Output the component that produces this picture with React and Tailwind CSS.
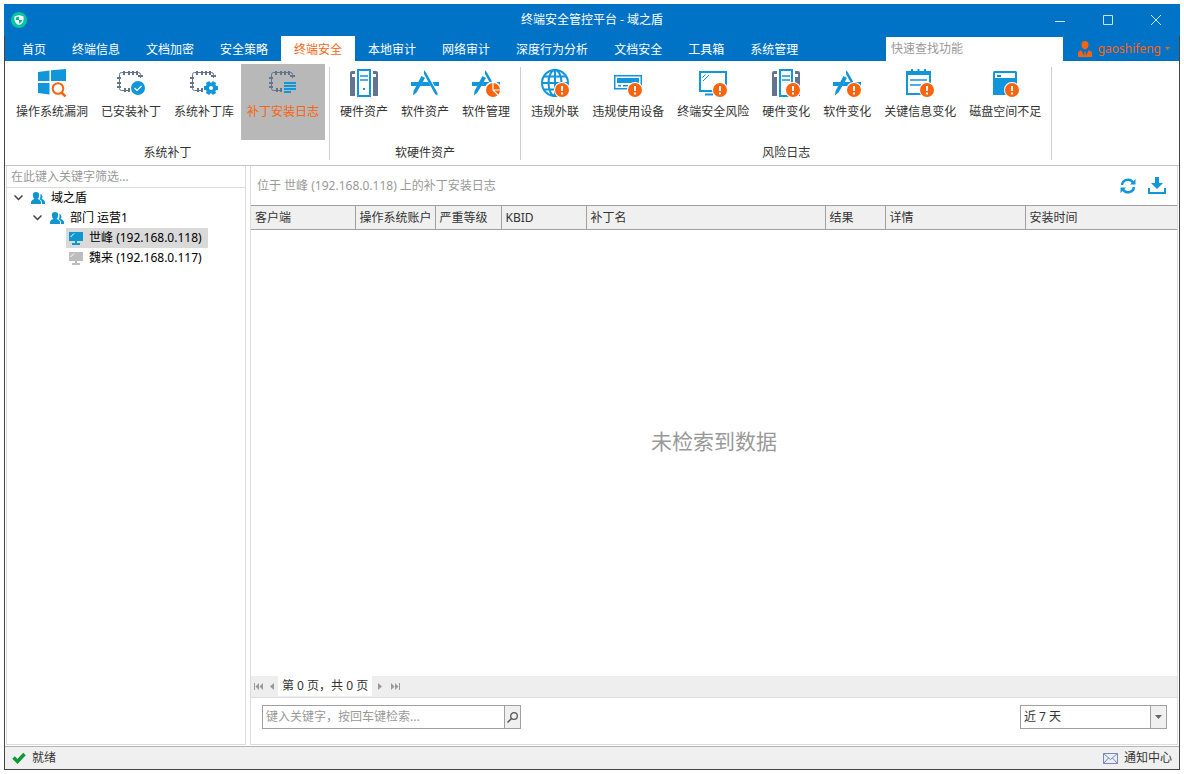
import { useState } from 'react';

const BLUE = '#1296db';
const SLATE = '#64748f';
const ORANGE = '#fa640f';

function Icon({ children }) {
  return (
    <svg width="28" height="28" viewBox="0 0 28 28" fill="none" aria-hidden="true">
      {children}
    </svg>
  );
}

function AlertBadge() {
  return (
    <g>
      <circle cx="21" cy="21" r="8" fill="#fff" />
      <circle cx="21" cy="21" r="7" fill={ORANGE} />
      <path d="M20 17h2v5h-2zM20 23.5h2v2h-2z" fill="#fff" />
    </g>
  );
}

function Chip() {
  return (
    <g stroke={SLATE}>
      <path d="M12 21.5H4.5Q2.5 21.5 2.5 19.5V5.5Q2.5 3.5 4.5 3.5H21.500Q23.500 3.500 23.500 5.500V9" />
      <path strokeWidth="2" d="M7 2v4M12 2v4M16 2v4M20 2v4M0 9h4M0 14h4M0 18h4M8 19v4M12 19v4M21 7h5" />
    </g>
  );
}

function Servers() {
  return (
    <g>
      <path d="M0 4Q0 2 2 2H5V5H2V8H5V27H0zM28 4Q28 2 26 2H23V5H26V8H23V27H28z" fill={SLATE} />
      <rect x="8" y="1" width="12" height="26" stroke={BLUE} strokeWidth="2" />
      <path d="M10 7h8M10 11h8" stroke={BLUE} strokeWidth="1.500" />
      <path d="M13 19h2v2h-2z" fill={BLUE} />
    </g>
  );
}

function Compass() {
  return (
    <g>
      <path d="M0 13h8l-2.500 4H0zM11.500 13h6l2 4H9zM21.500 13H28v4h-4.500z" fill={BLUE} />
      <path d="M10.500 7l3.500 2L5.500 23.500 2 26.500l.5-4.500zM13 1l2 2.500L26.500 24v2.500L24 25 13 5z" fill={BLUE} />
    </g>
  );
}

const icons = {
  windows: (
    <Icon>
      <path d="M0 3l11.500-1.500V12H0zM13 1.300L28 0V12H13zM0 14h11.500v11.500L0 24z" fill={BLUE} />
      <circle cx="20" cy="19.500" r="6.500" fill="#fff" />
      <circle cx="20" cy="19.500" r="5.300" stroke={ORANGE} strokeWidth="2" />
      <path d="M23.500 23.500l4 4" stroke={ORANGE} strokeWidth="2.500" />
    </Icon>
  ),
  chipCheck: (
    <Icon>
      <Chip />
      <circle cx="21" cy="19" r="7" fill={BLUE} />
      <path d="M17.500 19l2.500 2.500 4.500-4.500" stroke="#fff" strokeWidth="1.200" />
    </Icon>
  ),
  chipGear: (
    <Icon>
      <Chip />
      <path d="M17.500 13l7 12M14 19h14M24.500 13l-7 12" stroke={BLUE} strokeWidth="4" />
      <circle cx="21" cy="19" r="5.500" fill={BLUE} />
      <circle cx="21" cy="19" r="2" fill="#fff" />
    </Icon>
  ),
  chipList: (
    <Icon>
      <Chip />
      <path d="M15 14h12M15 17h12M15 20h12M15 23h7" stroke={BLUE} strokeWidth="1.800" />
    </Icon>
  ),
  servers: <Icon><Servers /></Icon>,
  compass: <Icon><Compass /></Icon>,
  compassPie: (
    <Icon>
      <Compass />
      <circle cx="21" cy="21" r="8.500" fill="#fff" />
      <circle cx="21" cy="21" r="7" fill={ORANGE} />
      <path d="M21 14v7l5 5M21 21h7" stroke="#fff" strokeWidth="1.200" />
    </Icon>
  ),
  globe: (
    <Icon>
      <g stroke={BLUE} strokeWidth="2">
        <circle cx="14" cy="14" r="13" />
        <ellipse cx="14" cy="14" rx="6.500" ry="13" />
        <path d="M14 1v26M1 14h26M3 7.500h22M3 20.500h22" />
      </g>
      <AlertBadge />
    </Icon>
  ),
  device: (
    <Icon>
      <rect x=".75" y="6.750" width="26.500" height="13" stroke={BLUE} strokeWidth="1.500" />
      <path d="M3 9h22v5H3zM4 16h3v1.500H4zM9 16h5v1.500H9z" fill={BLUE} />
      <AlertBadge />
    </Icon>
  ),
  monitor: (
    <Icon>
      <rect x="1" y="3" width="26" height="19" stroke={BLUE} strokeWidth="2" />
      <path d="M3.500 8.500l3-3M4 12l6-6" stroke={BLUE} />
      <path d="M6 25.500h8" stroke={BLUE} strokeWidth="2" />
      <AlertBadge />
    </Icon>
  ),
  serversAlert: <Icon><Servers /><AlertBadge /></Icon>,
  compassAlert: <Icon><Compass /><AlertBadge /></Icon>,
  calendar: (
    <Icon>
      <path d="M1 3h23v22H1z" stroke={BLUE} strokeWidth="2" />
      <path d="M1 3h23v3H1z" fill={BLUE} />
      <path d="M6 0v5M12.500 0v5M19 0v5" stroke={BLUE} strokeWidth="2" />
      <path d="M4 11h17M4 16h11" stroke={BLUE} strokeWidth="1.500" />
      <AlertBadge />
    </Icon>
  ),
  disk: (
    <Icon>
      <path d="M2 3.500Q2 2 3.500 2H24.500Q26 2 26 3.500V26H2z" fill={BLUE} />
      <path d="M4 4h20v5H4z" fill="#fff" />
      <path d="M6 6h4v2H6z" fill={BLUE} />
      <AlertBadge />
    </Icon>
  ),
};

const tabs = [
  '首页', '终端信息', '文档加密', '安全策略', '终端安全', '本地审计',
  '网络审计', '深度行为分析', '文档安全', '工具箱', '系统管理',
];

const ribbon = [
  {
    title: '系统补丁',
    items: [
      ['操作系统漏洞', 'windows'],
      ['已安装补丁', 'chipCheck'],
      ['系统补丁库', 'chipGear'],
      ['补丁安装日志', 'chipList'],
    ],
  },
  {
    title: '软硬件资产',
    items: [
      ['硬件资产', 'servers'],
      ['软件资产', 'compass'],
      ['软件管理', 'compassPie'],
    ],
  },
  {
    title: '风险日志',
    items: [
      ['违规外联', 'globe'],
      ['违规使用设备', 'device'],
      ['终端安全风险', 'monitor'],
      ['硬件变化', 'serversAlert'],
      ['软件变化', 'compassAlert'],
      ['关键信息变化', 'calendar'],
      ['磁盘空间不足', 'disk'],
    ],
  },
];

const columns = [
  ['客户端', 'w-[104px]'],
  ['操作系统账户', 'w-20'],
  ['严重等级', 'w-[66px]'],
  ['KBID', 'w-[85px]'],
  ['补丁名', 'w-[239px]'],
  ['结果', 'w-[60px]'],
  ['详情', 'w-[140px]'],
  ['安装时间', ''],
];

function TitleBar() {
  return (
    <header className="grid h-8 grid-cols-[1fr_auto_1fr] items-center bg-[#0173c7] text-white">
      <svg className="ml-[7px]" width="16" height="16" viewBox="0 0 16 16" aria-hidden="true">
        <circle cx="8" cy="8" r="8" fill="#05c6a0" />
        <path d="M8 3l4.500 1.500V8Q12 11.500 8 13 4 11.500 3.500 8V4.500z" fill="#fff" />
        <path d="M8 4.500V8H4.800V5.500zM8 8h3.300Q11 10.500 8 11.700z" fill="#05b890" />
      </svg>
      <h1>终端安全管控平台 - 域之盾</h1>
      <div className="flex justify-end">
        <button aria-label="最小化" className="flex h-8 w-12 items-center justify-center">
          <svg width="10" height="10" stroke="#cfe3f3"><path d="M0 6.500h10" /></svg>
        </button>
        <button aria-label="最大化" className="flex h-8 w-12 items-center justify-center">
          <svg width="10" height="10" fill="none" stroke="#cfe3f3"><path d="M.5 .5h9v9h-9z" /></svg>
        </button>
        <button aria-label="关闭" className="flex h-8 w-12 items-center justify-center">
          <svg width="10" height="10" stroke="#cfe3f3"><path d="M0 0l10 10M10 0L0 10" /></svg>
        </button>
      </div>
    </header>
  );
}

function TabBar({ active, onSelect }) {
  return (
    <div className="flex h-[25px] items-stretch bg-[#0173c7] pl-1 text-white">
      <nav className="flex">
        {tabs.map((tab) => (
          <button
            key={tab}
            onClick={() => onSelect(tab)}
            className={`px-[13px] pt-0.5 whitespace-nowrap ${tab === active ? 'bg-white text-[#fa640f]' : ''}`}
          >
            {tab}
          </button>
        ))}
      </nav>
      <input
        type="text"
        aria-label="快速查找功能"
        placeholder="快速查找功能"
        className="mt-px ml-auto w-[177px] bg-white px-[5px] text-gray-800 outline-none placeholder:text-[#999]"
      />
      <button className="flex w-[116px] items-center justify-end gap-1 pr-[9px] text-[#fa640f]">
        <svg className="mr-0.5" width="14" height="16" viewBox="0 0 14 16" fill="currentColor" aria-hidden="true">
          <path d="M7 0Q10.500 0 10.500 4 10.500 7.500 7 8.500 3.500 7.500 3.500 4 3.500 0 7 0z" />
          <path d="M0 16v-4q0-2 3.500-2.500L6 15l.5-4.500h1L8 15l2.500-5.500Q14 10 14 12v4z" />
        </svg>
        gaoshifeng
        <svg width="5" height="3" fill="currentColor" aria-hidden="true"><path d="M0 0h5L2.500 3z" /></svg>
      </button>
    </div>
  );
}

function Ribbon({ active, onSelect }) {
  return (
    <div className="flex border-b border-[#c6c6c6] pt-[3px] pb-[5px] pl-px">
      {ribbon.map((group) => (
        <section key={group.title} className="flex">
          <div className="flex flex-col px-1">
            <div className="flex gap-px">
              {group.items.map(([label, icon]) => (
                <button
                  key={label}
                  onClick={() => onSelect(label)}
                  className={`flex h-19 flex-col items-center gap-[7px] px-1.5 pt-[5px] whitespace-nowrap ${
                    label === active ? 'bg-[#b8b8b8] text-[#fa640f]' : ''
                  }`}
                >
                  {icons[icon]}
                  {label}
                </button>
              ))}
            </div>
            <h2 className="pt-[5px] text-center leading-[15px]">{group.title}</h2>
          </div>
          <div className="mt-[3px] w-px bg-[#d0d0d0]" />
        </section>
      ))}
    </div>
  );
}

function PeopleIcon() {
  return (
    <svg width="14" height="12" viewBox="0 0 14 12" fill="#0f96cf" aria-hidden="true">
      <path d="M5 0Q8.200 0 8.200 3.200 8 6 6.500 7q3.500 1 3.500 3.500V12H0v-1.500Q0 8 3.500 7 2 6 1.800 3.200 1.800 0 5 0z" />
      <path d="M9.200 2q2.300 0 2.300 2.500 0 1.800-1 2.500Q14 8 14 10.500V12h-3v-1.500Q11 8.500 8.500 7q1-1 1-3.500z" />
    </svg>
  );
}

function PcIcon({ color }) {
  return (
    <svg width="14" height="13" viewBox="0 0 14 13" aria-hidden="true">
      <path d="M0 0h14v9H0zM3 11h8v2H3zM6 9h2v2H6z" fill={color} />
      <path d="M1.500 5l3.500-3.500" stroke="#fff" />
    </svg>
  );
}

function Chevron() {
  return (
    <svg width="9" height="6" fill="none" stroke="#444" strokeWidth="1.500" aria-hidden="true">
      <path d="M.5 .5l4 4 4-4" />
    </svg>
  );
}

function Sidebar() {
  const [selected, setSelected] = useState('世峰');
  const clients = [
    { name: '世峰', ip: '192.168.0.118', online: true },
    { name: '魏来', ip: '192.168.0.117', online: false },
  ];

  return (
    <aside className="w-60 shrink-0 border-x border-b border-[#dcdcdc] text-black">
      <input
        type="text"
        aria-label="在此键入关键字筛选"
        placeholder="在此键入关键字筛选..."
        className="block h-[22px] w-full border-b border-[#dcdcdc] px-1 outline-none placeholder:text-[#999]"
      />
      <button className="flex h-5 items-center gap-2 pl-[7px]">
        <Chevron />
        <PeopleIcon />
        <span className="-ml-0.5">域之盾</span>
      </button>
      <button className="flex h-5 items-center gap-2 pl-[26px]">
        <Chevron />
        <PeopleIcon />
        <span className="-ml-0.5">部门 运营1</span>
      </button>
      <ul className="pl-[59px]">
        {clients.map((c) => (
          <li key={c.name}>
            <button
              onClick={() => setSelected(c.name)}
              className={`flex h-5 items-center gap-1.5 pr-1.5 pl-[3px] whitespace-nowrap ${
                selected === c.name ? 'bg-[#d9d9d9]' : ''
              }`}
            >
              <PcIcon color={c.online ? '#0f96cf' : '#bdbdbd'} />
              {c.name} ({c.ip})
            </button>
          </li>
        ))}
      </ul>
    </aside>
  );
}

function Pager() {
  return (
    <div className="flex h-[22px] items-start border-b border-[#dcdcdc] bg-[#eee] text-[#999]">
      <button aria-label="首页" className="h-5 px-[3px]">
        <svg width="9" height="7" fill="currentColor"><path d="M0 0h1v7H0zM5 0v7L1.500 3.500zM9 0v7L5.500 3.500z" /></svg>
      </button>
      <button aria-label="上一页" className="h-5 px-1">
        <svg width="4" height="7" fill="currentColor"><path d="M4 0v7L0 3.500z" /></svg>
      </button>
      <span className="bg-white px-1 leading-5 whitespace-nowrap text-[#333]">第 0 页，共 0 页</span>
      <button aria-label="下一页" className="h-5 px-1.5">
        <svg width="4" height="7" fill="currentColor"><path d="M0 0v7l4-3.500z" /></svg>
      </button>
      <button aria-label="末页" className="h-5 px-[3px]">
        <svg width="9" height="7" fill="currentColor"><path d="M8 0h1v7H8zM0 0v7l3.500-3.500zM4 0v7l3.500-3.500z" /></svg>
      </button>
    </div>
  );
}

function LogPanel() {
  return (
    <main className="flex min-w-0 flex-1 flex-col border-x border-b border-[#dcdcdc]">
      <div className="flex h-[39px] items-center justify-between pr-[11px] pl-1.5 text-[#999]">
        <p>位于 世峰 (192.168.0.118) 上的补丁安装日志</p>
        <div className="flex items-center gap-3">
          <button aria-label="刷新">
            <svg width="16" height="16" viewBox="0 0 16 16" fill="none" stroke={BLUE} strokeWidth="2.500">
              <path d="M2 7A6 6 0 0 1 13 4.500M14 9A6 6 0 0 1 3 11.500" />
              <path d="M15.500 1v5.500H10zM.5 15V9.500H6z" fill={BLUE} stroke="none" />
            </svg>
          </button>
          <button aria-label="导出">
            <svg width="18" height="17" viewBox="0 0 18 17" fill={BLUE}>
              <path d="M7 0h4v6h4L9 12 3 6h4z" />
              <path d="M0 11h2v4h14v-4h2v6H0z" />
            </svg>
          </button>
        </div>
      </div>
      <table className="w-full table-fixed border-collapse">
        <thead>
          <tr className="h-6 border-y border-[#a0a0a0] bg-[#f0f0f0]">
            {columns.map(([name, width]) => (
              <th
                key={name}
                className={`border-r border-[#a0a0a0] p-0 pl-1 text-left font-normal whitespace-nowrap last:border-r-0 ${width}`}
              >
                {name}
              </th>
            ))}
          </tr>
        </thead>
      </table>
      <div className="flex flex-1 items-center justify-center pb-6 text-[21px] text-[#999]">
        未检索到数据
      </div>
      <Pager />
      <div className="flex items-start justify-between pt-[7px] pr-2.5 pb-[15px] pl-[11px]">
        <div className="flex h-6 w-[259px] border border-[#a0a0a0]">
          <input
            type="text"
            aria-label="键入关键字，按回车键检索"
            placeholder="键入关键字，按回车键检索..."
            className="min-w-0 flex-1 px-[3px] outline-none placeholder:text-[#999]"
          />
          <button aria-label="检索" className="flex w-4 items-center justify-center border-l border-[#a0a0a0] bg-[#f0f0f0]">
            <svg width="11" height="11" fill="none" stroke="#555">
              <circle cx="7" cy="4" r="3.300" strokeWidth="1.300" />
              <path d="M4.500 6.500L.5 10.500" strokeWidth="1.500" />
            </svg>
          </button>
        </div>
        <div className="relative h-6 w-[147px] border border-[#a0a0a0]">
          <select aria-label="时间范围" className="h-full w-full appearance-none pl-[3px] outline-none">
            <option>近 7 天</option>
            <option>近 30 天</option>
          </select>
          <span className="pointer-events-none absolute inset-y-0 right-0 flex w-4 items-center justify-center border-l border-[#a0a0a0] bg-[#f0f0f0]">
            <svg width="7" height="4" fill="#666"><path d="M0 0h7L3.500 4z" /></svg>
          </span>
        </div>
      </div>
    </main>
  );
}

function StatusBar() {
  return (
    <footer className="mt-px flex h-[23px] items-center justify-between border-t border-[#b4b4b4] bg-[#f0f0f0] px-[7px]">
      <div className="flex items-center gap-1.5">
        <svg width="14" height="12" viewBox="0 0 14 12" aria-hidden="true">
          <path d="M1.500 5.500L5.500 9.500 12.500 2" fill="none" stroke="#0b9a35" strokeWidth="3.500" />
        </svg>
        就绪
      </div>
      <button className="flex items-center gap-1.5">
        <svg width="15" height="11" viewBox="0 0 15 11" fill="#e9eefa" stroke="#7b88b8" aria-hidden="true">
          <path d="M.5 .5h14v10H.5z" />
          <path d="M.5 .5l7 6 7-6M.5 10.500l5-5.500M14.500 10.500l-5-5.500" fill="none" />
        </svg>
        通知中心
      </button>
    </footer>
  );
}

export default function App() {
  const [tab, setTab] = useState('终端安全');
  const [tool, setTool] = useState('补丁安装日志');

  return (
    <div className="flex min-h-screen flex-col bg-white p-1 font-['Noto_Sans','Noto_Sans_CJK_SC',sans-serif] text-xs text-[#333]">
      <TitleBar />
      <div className="flex flex-1 flex-col border-x border-b border-[#444]">
        <TabBar active={tab} onSelect={setTab} />
        <Ribbon active={tool} onSelect={setTool} />
        <div className="flex flex-1 gap-1 px-px">
          <Sidebar />
          <LogPanel />
        </div>
        <StatusBar />
      </div>
    </div>
  );
}
